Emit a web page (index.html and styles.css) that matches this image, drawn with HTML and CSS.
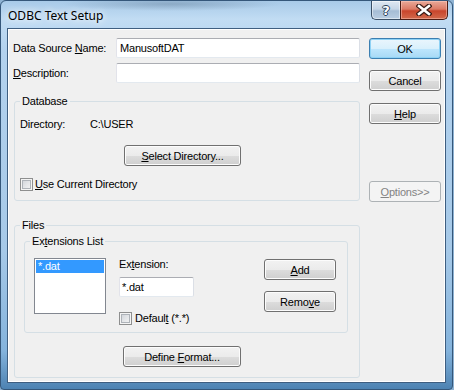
FILE: index.html
```html
<!DOCTYPE html>
<html lang="en">
<head>
    <meta charset="UTF-8">
    <title>ODBC Text Setup</title>
    <link rel="stylesheet" href="styles.css">
</head>
<body>
    <div class="window">
        <div class="titlebar">
            <span class="title">ODBC Text Setup</span>
            <div class="caption-buttons">
                <div class="cap-btn cap-help">?</div>
                <div class="cap-btn cap-close">
                    <svg width="16" height="12" viewBox="0 0 16 12">
                        <path d="M3 2 L13 10 M13 2 L3 10" stroke="#3a1c16" stroke-width="5" stroke-linecap="square" fill="none"/>
                        <path d="M3 2 L13 10 M13 2 L3 10" stroke="#fff" stroke-width="2.6" stroke-linecap="square" fill="none"/>
                    </svg>
                </div>
            </div>
        </div>

        <div class="client">
            <div class="main">
                <div class="row">
                    <span class="field-label">Data Source <u>N</u>ame:</span>
                    <div class="textbox wide">ManusoftDAT</div>
                </div>
                <div class="row row-desc">
                    <span class="field-label"><u>D</u>escription:</span>
                    <div class="textbox wide"></div>
                </div>

                <fieldset class="group group-db">
                    <legend>Database</legend>
                    <div class="dir-row">
                        <span class="dir-label">Directory:</span>
                        <span>C:\USER</span>
                    </div>
                    <button class="btn btn-select"><u>S</u>elect Directory...</button>
                    <div class="check-row check-current">
                        <span class="checkbox"></span>
                        <span><u>U</u>se Current Directory</span>
                    </div>
                </fieldset>

                <fieldset class="group group-files">
                    <legend>Files</legend>
                    <fieldset class="group group-ext">
                        <legend>Ex<u>t</u>ensions List</legend>
                        <div class="ext-body">
                            <div class="listbox">
                                <div class="list-item selected">*.dat</div>
                            </div>
                            <div class="ext-fields">
                                <span>Ex<u>t</u>ension:</span>
                                <div class="textbox short">*.dat</div>
                                <div class="check-row check-default">
                                    <span class="checkbox"></span>
                                    <span>Defaul<u>t</u> (*.*)</span>
                                </div>
                            </div>
                            <div class="ext-buttons">
                                <button class="btn btn-add"><u>A</u>dd</button>
                                <button class="btn btn-remove">Remo<u>v</u>e</button>
                            </div>
                        </div>
                    </fieldset>
                    <button class="btn btn-format">Define <u>F</u>ormat...</button>
                </fieldset>
            </div>

            <div class="side">
                <button class="btn btn-default">OK</button>
                <button class="btn btn-cancel">Cancel</button>
                <button class="btn btn-help"><u>H</u>elp</button>
                <button class="btn btn-disabled btn-options"><u>O</u>ptions&gt;&gt;</button>
            </div>
        </div>
    </div>
</body>
</html>
```

FILE: styles.css
```css
body {
    margin: 0;
    width: 454px;
    height: 390px;
    overflow: hidden;
    background-color: #8fb3d3;
    font-family: "Liberation Sans", Arial, sans-serif;
    font-size: 11px;
    line-height: 13px;
    letter-spacing: -0.2px;
    color: #000;
}
u {
    text-decoration: underline;
    text-underline-offset: 1px;
}
.window {
    box-sizing: border-box;
    width: 453px;
    height: 390px;
    padding: 0 6px 6px 6px;
    border: 1px solid #35577a;
    border-radius: 6px 6px 4px 4px;
    background:
        radial-gradient(ellipse 110px 7px at 170px 3px, rgba(80, 105, 130, 0.35), transparent),
        linear-gradient(180deg, #a8cae8 0px, #c1dcf3 18px, #b3d2ee 50px, #a6c9e8 250px, #84b3dc 350px, #4a80b0 390px);
}
/* title bar */
.titlebar {
    height: 27px;
    display: flex;
    align-items: flex-start;
}
.title {
    margin-top: 7px;
    margin-left: 1px;
    font-family: "Noto Sans", "Open Sans", sans-serif;
    font-size: 12px;
    line-height: 16px;
    letter-spacing: 0;
    color: #000;
    text-shadow: 0 0 6px rgba(255, 255, 255, 0.9), 0 0 10px rgba(255, 255, 255, 0.7);
}
.caption-buttons {
    margin-left: auto;
    margin-right: -2px;
    display: flex;
}
.cap-btn {
    box-sizing: border-box;
    height: 19px;
    border: 1px solid #3a4f66;
    border-top: none;
    display: flex;
    align-items: center;
    justify-content: center;
}
.cap-help {
    width: 29px;
    border-right: none;
    border-radius: 0 0 0 5px;
    background: linear-gradient(180deg, #dfe8f2 0%, #c6d6e7 45%, #a6bdd5 55%, #b9cde2 100%);
    box-shadow: inset 0 0 0 1px rgba(255, 255, 255, 0.5);
    font-family: "DejaVu Sans", sans-serif;
    font-weight: bold;
    font-size: 13px;
    color: #fff;
    text-shadow: 1px 0 0 #29405a, -1px 0 0 #29405a, 0 1px 0 #29405a, 0 -1px 0 #29405a;
}
.cap-close {
    width: 48px;
    border-color: #4a1c14;
    border-radius: 0 0 5px 0;
    background: linear-gradient(180deg, #e9a999 0%, #dc7b66 45%, #c8452c 55%, #d26a4c 100%);
    box-shadow: inset 0 0 0 1px rgba(255, 210, 200, 0.45);
}
/* client area */
.client {
    box-sizing: border-box;
    height: 355px;
    padding: 9px 5px 0 5px;
    display: flex;
    background-color: #f0f0f0;
    border: 1px solid #3e5e80;
    box-shadow: inset 0 0 0 1px #fff;
}
.main {
    width: 347px;
}
.row {
    display: flex;
    align-items: center;
}
.row-desc {
    margin-top: 5px;
}
.field-label {
    width: 103px;
    flex-shrink: 0;
}
.textbox {
    box-sizing: border-box;
    height: 20px;
    padding-left: 3px;
    display: flex;
    align-items: center;
    background-color: #fff;
    border: 1px solid;
    border-color: #abadb3 #dbdfe6 #e3e9ef #e2e3ea;
    border-radius: 2px;
}
.textbox.wide {
    width: 244px;
}
.textbox.short {
    width: 75px;
    margin-top: 6px;
    padding-left: 2px;
}
/* group boxes */
.group {
    margin: 0;
    min-inline-size: 0;
    border: 1px solid #d5dfe5;
    border-radius: 3px;
}
.group legend {
    padding: 0 2px;
    line-height: 13px;
}
.group-db {
    margin: 12px 0 0 1px;
    padding: 10px 5px 9px 5px;
}
.dir-row {
    display: flex;
}
.dir-label {
    width: 70px;
}
.check-row {
    display: flex;
    align-items: center;
    gap: 3px;
}
.check-current {
    margin-top: 12px;
    gap: 2px;
}
.checkbox {
    box-sizing: border-box;
    width: 13px;
    height: 13px;
    border: 1px solid #8e8f8f;
    background: linear-gradient(135deg, #cbcfd5 0%, #e3e5e8 50%, #f7f7f7 100%);
    box-shadow: inset 0 0 0 1px #f4f4f4, inset 0 0 0 2px #aeb3b9;
}
.group-files {
    margin: 18px 0 0 1px;
    padding: 3px 11px 10px 9px;
}
.group-files > legend,
.group-ext > legend {
    margin-left: -4px;
}
.group-ext {
    padding: 10px 9px 7px 9px;
}
.ext-body {
    display: flex;
    align-items: flex-start;
}
.listbox {
    box-sizing: border-box;
    width: 72px;
    height: 56px;
    padding: 1px;
    background-color: #fff;
    border: 1px solid #828790;
}
.list-item {
    height: 13px;
    padding-left: 2px;
}
.list-item.selected {
    background-color: #3399ff;
    color: #fff;
}
.ext-fields {
    margin-left: 13px;
    width: 75px;
}
.check-default {
    margin-top: 15px;
    white-space: nowrap;
}
.ext-buttons {
    margin-left: 70px;
}
/* buttons */
.btn {
    box-sizing: border-box;
    display: block;
    width: 72px;
    height: 21px;
    padding: 0;
    font-family: inherit;
    font-size: 11px;
    letter-spacing: -0.2px;
    color: #000;
    border: 1px solid #707070;
    border-radius: 3px;
    background: linear-gradient(180deg, #f2f2f2 0%, #ebebeb 50%, #dddddd 50%, #cfcfcf 100%);
    box-shadow: inset 0 0 0 1px #fcfcfc;
}
.btn-default {
    border-color: #3c7fb1;
    background: linear-gradient(180deg, #eaf6fd 0%, #d9f0fc 50%, #bee6fd 50%, #a7d9f5 100%);
    box-shadow: inset 0 0 0 1px #8ed2f5;
}
.btn-disabled {
    color: #838383;
    border-color: #adb2b5;
    background: #f4f4f4;
    box-shadow: none;
}
.btn-select {
    margin: 14px 0 0 104px;
    width: 117px;
}
.btn-add {
    margin-top: 1px;
}
.btn-remove {
    margin-top: 11px;
}
.btn-format {
    margin: 13px 0 0 99px;
    width: 118px;
}
.side {
    margin-left: 9px;
    width: 72px;
}
.btn-cancel {
    margin-top: 11px;
}
.btn-help {
    margin-top: 12px;
}
.btn-options {
    margin-top: 57px;
}
```
